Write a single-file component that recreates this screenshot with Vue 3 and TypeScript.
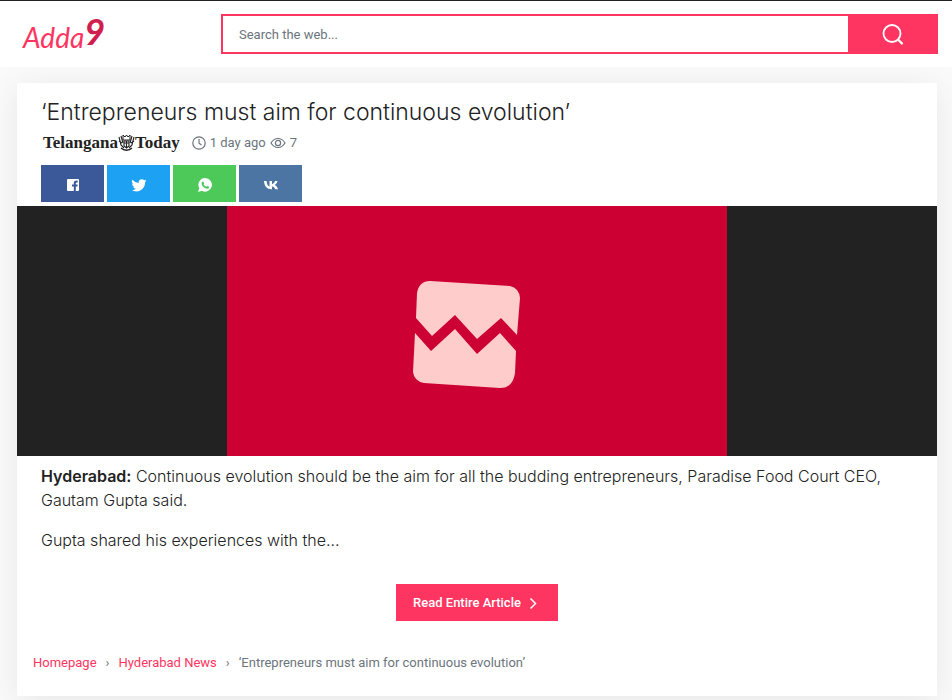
<script setup lang="ts">
import { ref } from 'vue'

interface Share {
  name: string
  tone: string
  path: string
}

const query = ref('')
const title = '‘Entrepreneurs must aim for continuous evolution’'

const shares: Share[] = [
  {
    name: 'Facebook',
    tone: 'facebook',
    path: 'M3 2h10a1 1 0 0 1 1 1v10a1 1 0 0 1-1 1h-2.2V9.5h1.6l.3-2h-1.9V6.3c0-.6.3-.9 1-.9h.9V3.6c-.4 0-.9-.1-1.4-.1-1.6 0-2.5.9-2.5 2.5v1.5H7v2h1.8V14H3a1 1 0 0 1-1-1V3a1 1 0 0 1 1-1z',
  },
  {
    name: 'Twitter',
    tone: 'twitter',
    path: 'M15.5 3.6a6 6 0 0 1-1.8.5 3 3 0 0 0 1.4-1.7 6 6 0 0 1-2 .8A3.1 3.1 0 0 0 7.8 6 8.8 8.8 0 0 1 1.4 2.7a3.1 3.1 0 0 0 1 4.2A3 3 0 0 1 1 6.5a3.1 3.1 0 0 0 2.5 3.1 3 3 0 0 1-1.4.1 3.1 3.1 0 0 0 2.9 2.1A6.2 6.2 0 0 1 .5 13.1 8.8 8.8 0 0 0 14 5.2a6 6 0 0 0 1.5-1.6z',
  },
  {
    name: 'WhatsApp',
    tone: 'whatsapp',
    path: 'M8.2 1A6.8 6.8 0 0 0 2.3 11.2L1 15l3.9-1.2A6.8 6.8 0 1 0 8.2 1zM5.8 4.4c.3 0 .5 0 .6.3l.7 1.6c0 .3-.3.7-.6 1 .7 1.3 1.6 2 2.8 2.5.4-.4.6-.9.9-.9l1.8.9c.2.5-.1 1.3-.6 1.6-.9.6-2.3.3-3.7-.5C6 9.8 4.7 8 4.6 6.4c0-.9.5-2 1.2-2z',
  },
  {
    name: 'VK',
    tone: 'vk',
    path: 'M8.6 12.2C4 12.2 1.3 9.2 1 4h2.6c.1 3.5 1.5 5.2 2.9 5.6V4H9v3.2c1.3-.2 2.5-1.6 3-3.2h2.5c-.4 1.9-1.7 3.3-2.7 3.9 1 .5 2.5 1.7 3.2 4.3h-2.7C11.7 10.7 10.5 9.7 9 9.5v2.7z',
  },
]
</script>

<template>
  <div class="page">
    <header class="topbar">
      <a class="brand" href="#" aria-label="Adda9"><span>Adda</span><span class="nine">9</span></a>
      <form class="search" role="search" @submit.prevent>
        <input v-model="query" type="text" placeholder="Search the web..." aria-label="Search the web" />
        <button type="submit" aria-label="Search">
          <svg width="24" height="24" viewBox="0 0 24 24" fill="none" stroke="currentColor" stroke-width="1.8">
            <circle cx="11" cy="11.5" r="8.5" />
            <path d="M17 17.5l4.6 4.6" stroke-width="2.2" />
          </svg>
        </button>
      </form>
    </header>

    <main class="content">
      <article class="card">
        <div class="head">
          <h1>{{ title }}</h1>
          <div class="meta">
            <a class="source" href="#">
              <span>Telangana</span>
              <svg width="17" height="18" viewBox="0 0 17 18" fill="none" stroke="currentColor">
                <path d="M1 3l2 8 3 3M16 3l-2 8-3 3M3 2l2 7M14 2l-2 7M1 7l3 2M16 7l-3 2" stroke-width="1.1" />
                <path d="M5 1l2 2 1.5-2L10 3l2-2v5H5z" stroke-width="1" />
                <path d="M6 7h5v5l-2.5 2L6 12zM6 9h5M8.5 7v7" stroke-width="1.1" />
                <path d="M3 14c3 3 8 3 11 0" stroke-width="1.5" />
              </svg>
              <span>Today</span>
            </a>
            <svg width="14" height="14" viewBox="0 0 14 14" fill="none" stroke="currentColor" stroke-width="1.2">
              <circle cx="7" cy="7" r="6.2" />
              <path d="M7 3v4.2l2.5 1.8" />
            </svg>
            <span>1 day ago</span>
            <svg width="16" height="14" viewBox="0 0 16 14" fill="none" stroke="currentColor" stroke-width="1.2">
              <path d="M1 7c1.8-3 4.2-4.5 7-4.5S13.2 4 15 7c-1.8 3-4.2 4.5-7 4.5S2.8 10 1 7z" />
              <circle cx="8" cy="7" r="2.6" />
            </svg>
            <span>7</span>
          </div>
          <div class="shares">
            <a v-for="s in shares" :key="s.name" href="#" :class="s.tone" :aria-label="s.name">
              <svg width="16" height="16" viewBox="0 0 16 16" fill="currentColor">
                <path :d="s.path" />
              </svg>
            </a>
          </div>
        </div>

        <div class="hero">
          <svg width="500" height="250" viewBox="0 0 500 250">
            <rect width="500" height="250" fill="#cc0033" />
            <g fill="#ffcccc">
              <path d="M190 87Q192 75 203 75L283 80Q292 82 293 92L290 129L274 112L250 133L228 109L205 130L189 112z" />
              <path d="M188 127L204 145L228 123L250 148L273 127L289 145L288 167Q286 182 273 182L197 177Q187 175 186 166z" />
            </g>
          </svg>
        </div>

        <div class="story">
          <p><strong>Hyderabad:</strong> Continuous evolution should be the aim for all the budding entrepreneurs, Paradise Food Court CEO, Gautam Gupta said.</p>
          <p>Gupta shared his experiences with the...</p>
        </div>

        <div class="action">
          <a class="more" href="#">
            <span>Read Entire Article</span>
            <svg width="8" height="12" viewBox="0 0 8 12" fill="none" stroke="currentColor" stroke-width="1.5">
              <path d="M1.5 1.5l5 5-5 5" />
            </svg>
          </a>
        </div>

        <nav class="crumbs" aria-label="Breadcrumb">
          <a href="#">Homepage</a>
          <span class="sep">›</span>
          <a href="#">Hyderabad News</a>
          <span class="sep">›</span>
          <span>{{ title }}</span>
        </nav>
      </article>
    </main>
  </div>
</template>

<style>
body {
  margin: 0;
  background: #fafafa;
}
</style>

<style scoped>
* {
  box-sizing: border-box;
}
.page {
  font-family: Inter, 'Liberation Sans', sans-serif;
  font-size: 16px;
  line-height: 24px;
  color: #222;
}
a {
  text-decoration: none;
}
svg {
  display: block;
  flex: none;
}
.topbar {
  display: flex;
  align-items: center;
  height: 67px;
  padding: 0 14px 0 23px;
  border-top: 1px solid #222;
  background: #fff;
}
.brand {
  display: flex;
  align-items: flex-end;
  width: 198px;
  font-family: Lato, sans-serif;
  font-size: 28px;
  font-style: italic;
  line-height: 34px;
  color: #ff3561;
}
.nine {
  padding-bottom: 6px;
  font-size: 36px;
  font-weight: 700;
  color: #cf1f4f;
}
.search {
  display: flex;
  flex: 1;
  height: 40px;
}
.search input {
  flex: 1;
  min-width: 0;
  padding: 0 16px;
  border: 2px solid #ff3561;
  border-right: 0;
  border-radius: 0;
  outline: 0;
  background: #fff;
  font-family: Roboto, sans-serif;
  font-size: 13px;
  color: #222;
}
.search input::placeholder {
  color: #6c757d;
  opacity: 1;
}
.search button {
  display: flex;
  align-items: center;
  justify-content: center;
  width: 90px;
  padding: 0;
  border: 0;
  background: #ff3561;
  color: #fff;
}
.content {
  padding: 16px 15px 4px 17px;
  overflow: hidden;
}
.card {
  background: #fff;
  box-shadow: 0 5px 32px rgba(0, 0, 0, 0.08);
}
.head {
  padding: 16px 24px 4px;
}
h1 {
  margin: 0;
  font-size: 23px;
  font-weight: 300;
  line-height: 26px;
}
.meta {
  display: flex;
  align-items: center;
  gap: 4px;
  height: 36px;
  font-family: Roboto, sans-serif;
  font-size: 13px;
  color: #6c757d;
}
.source {
  display: flex;
  align-items: center;
  margin: 0 8px 0 2px;
  font-family: 'Liberation Serif', serif;
  font-size: 17px;
  font-weight: 700;
  color: #222;
}
.shares {
  display: flex;
  gap: 3px;
  padding-top: 4px;
}
.shares a {
  display: flex;
  align-items: center;
  justify-content: center;
  width: 63px;
  height: 37px;
  padding-top: 2px;
  color: #fff;
}
.facebook {
  background: #3b5998;
}
.twitter {
  background: #1da1f2;
}
.whatsapp {
  background: #4dc95a;
}
.vk {
  background: #4c75a3;
}
.hero {
  display: flex;
  justify-content: center;
  background: #222;
}
.story {
  padding: 8px 24px 0;
  font-weight: 300;
}
.story p {
  margin: 0 0 16px;
}
.story strong {
  font-weight: 600;
}
.action {
  display: flex;
  justify-content: center;
  padding-top: 16px;
}
.more {
  display: flex;
  align-items: center;
  justify-content: center;
  gap: 8px;
  height: 37px;
  padding: 0 21px 0 17px;
  background: #ff3561;
  font-family: Roboto, sans-serif;
  font-size: 13px;
  font-weight: 500;
  color: #fff;
}
.crumbs {
  display: flex;
  align-items: center;
  padding: 30px 16px 21px;
  font-family: Roboto, sans-serif;
  font-size: 13px;
  color: #6c757d;
}
.crumbs a {
  color: #ff3561;
}
.sep {
  padding: 0 9px;
}
</style>
